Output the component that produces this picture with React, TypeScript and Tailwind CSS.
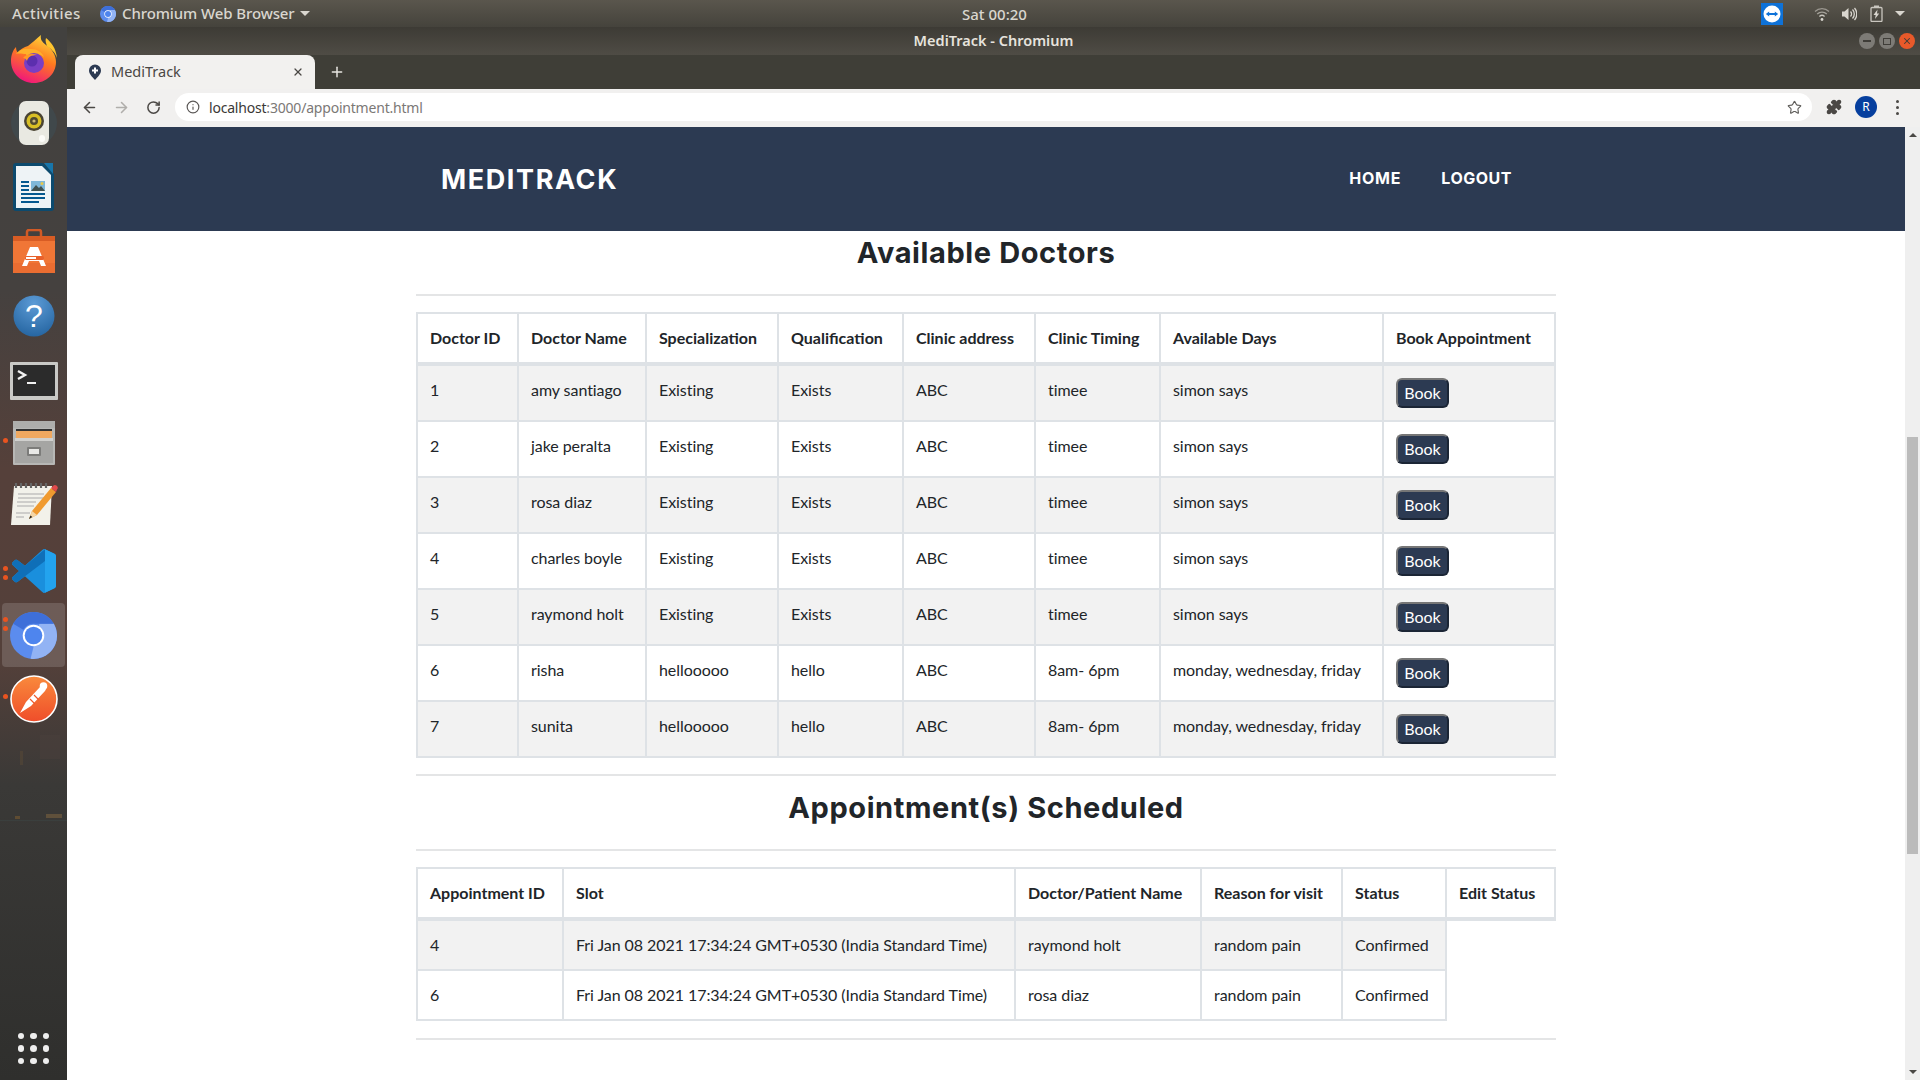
import { ArrowLeft, ArrowRight, RotateCw, Info, Star, Puzzle, X, Plus } from 'lucide-react'

const doctors = [
  ['1', 'amy santiago', 'Existing', 'Exists', 'ABC', 'timee', 'simon says'],
  ['2', 'jake peralta', 'Existing', 'Exists', 'ABC', 'timee', 'simon says'],
  ['3', 'rosa diaz', 'Existing', 'Exists', 'ABC', 'timee', 'simon says'],
  ['4', 'charles boyle', 'Existing', 'Exists', 'ABC', 'timee', 'simon says'],
  ['5', 'raymond holt', 'Existing', 'Exists', 'ABC', 'timee', 'simon says'],
  ['6', 'risha', 'hellooooo', 'hello', 'ABC', '8am- 6pm', 'monday, wednesday, friday'],
  ['7', 'sunita', 'hellooooo', 'hello', 'ABC', '8am- 6pm', 'monday, wednesday, friday'],
]
const doctorCols = [
  ['Doctor ID', 'w-[101px]'], ['Doctor Name', 'w-[128px]'], ['Specialization', 'w-[132px]'], ['Qualification', 'w-[125px]'],
  ['Clinic address', 'w-[132px]'], ['Clinic Timing', 'w-[125px]'], ['Available Days', 'w-[223px]'], ['Book Appointment', 'w-[172px]'],
]
const appts = [
  ['4', 'Fri Jan 08 2021 17:34:24 GMT+0530 (India Standard Time)', 'raymond holt', 'random pain', 'Confirmed'],
  ['6', 'Fri Jan 08 2021 17:34:24 GMT+0530 (India Standard Time)', 'rosa diaz', 'random pain', 'Confirmed'],
]
const apptCols = [
  ['Appointment ID', 'w-[146px]'], ['Slot', 'w-[452px]'], ['Doctor/Patient Name', 'w-[186px]'], ['Reason for visit', 'w-[141px]'],
  ['Status', 'w-[104px]'], ['Edit Status', 'w-[109px]'],
]

const thCls = 'border-2 border-b-4 border-[#dee2e6] px-3 py-3 text-left align-top font-bold whitespace-nowrap'
const tdCls = 'border-2 border-[#dee2e6] p-3 text-left align-top whitespace-nowrap tracking-[-0.06px]'

function Chromium({ size }: { size: number }) {
  return (
    <svg width={size} height={size} viewBox="0 0 48 48">
      <circle cx="24" cy="24" r="24" fill="#5b8cee" />
      <path d="M44.8 12H30L21 47.8A24 24 0 0 0 44.8 12Z" fill="#92b3f4" />
      <path d="M3.2 12A24 24 0 0 1 44.8 12H24A12 12 0 0 0 13.6 18Z" fill="#3e6fd9" />
      <circle cx="24" cy="24" r="11" fill="#fff" />
      <circle cx="24" cy="24" r="9" fill="#4e85ee" />
    </svg>
  )
}

function Firefox() {
  return (
    <svg width="48" height="50" viewBox="0 0 48 50">
      <defs>
        <linearGradient id="ffa" x1="0.7" y1="0" x2="0.3" y2="1">
          <stop offset="0" stopColor="#ffd53a" />
          <stop offset="0.45" stopColor="#ff7a1f" />
          <stop offset="1" stopColor="#f0127f" />
        </linearGradient>
      </defs>
      <path d="M24 49C11 49 1 39 1 27c0-6 2-11 5-14 0 3 1 5 2 6 2-4 6-6 10-7 4-3 8-7 13-11-1 4 1 7 5 10 6 4 10 10 10 17 0 12-10 21-22 21Z" fill="url(#ffa)" />
      <path d="M36 4c5 4 10 10 11 20-2-6-6-9-10-12-1-3-2-5-1-8Z" fill="#ffc52e" />
      <path d="M6 20c3-5 9-6 15-5 6 0 11 3 13 8-3-3-6-3-8-2-3-1-5 0-7 2-2 1-2 0-3-3-3 0-7-1-10 0Z" fill="#ffb02a" />
      <circle cx="24" cy="29" r="10" fill="#7a3fc4" />
      <circle cx="22" cy="27" r="5.5" fill="#5c2fae" />
      <path d="M13 24c3-4 9-5 14-3-6 0-9 2-10 6-1-2-2-3-4-3Z" fill="#ff9a22" />
    </svg>
  )
}

function Speaker() {
  return (
    <svg width="48" height="46" viewBox="0 0 48 46">
      <circle cx="24" cy="23" r="23" fill="#3d5360" opacity="0.4" />
      <rect x="9" y="1" width="30" height="44" rx="7" fill="#e9e9e2" />
      <circle cx="24" cy="21" r="10" fill="#4a4433" />
      <circle cx="24" cy="21" r="7.5" fill="#d8bf25" />
      <circle cx="24" cy="21" r="4" fill="#4f4a2f" />
      <circle cx="24" cy="21" r="1.6" fill="#c9b87a" />
      <rect x="29" y="35" width="6" height="7" rx="3" fill="#fbfbf8" />
    </svg>
  )
}

function Writer() {
  return (
    <svg width="42" height="48" viewBox="0 0 42 48">
      <path d="M3 0H30L41 11V45a3 3 0 0 1-3 3H3a3 3 0 0 1-3-3V3a3 3 0 0 1 3-3Z" fill="#0c4a6e" />
      <path d="M3 3H29L38 12V45H3Z" fill="#eef3f6" />
      <path d="M31 0H40V11Z" fill="#1876ab" />
      <rect x="8" y="18" width="8" height="2" fill="#05588f" />
      <rect x="8" y="22" width="8" height="2" fill="#05588f" />
      <rect x="8" y="26" width="8" height="2" fill="#05588f" />
      <rect x="8" y="30" width="24" height="2" fill="#05588f" />
      <rect x="8" y="34" width="24" height="2" fill="#05588f" />
      <rect x="8" y="38" width="18" height="2" fill="#05588f" />
      <rect x="18" y="18" width="14" height="10" fill="#7fb7d8" />
      <path d="M18 28l5-6 3 3 2-2 4 5Z" fill="#40504f" />
      <circle cx="29" cy="20.5" r="1.5" fill="#e8c84a" />
    </svg>
  )
}

function Software() {
  return (
    <svg width="44" height="44" viewBox="0 0 44 44">
      <path d="M15 8V3a2 2 0 0 1 2-2h10a2 2 0 0 1 2 2v5" stroke="#d15a26" strokeWidth="2.5" fill="none" />
      <path d="M1 7H43V44H1Z" fill="#f07636" />
      <path d="M1 7H43L43 12H1Z" fill="#d85c24" />
      <path d="M1 34H43V44H1Z" fill="#ea6d31" />
      <path d="M18 18h8l8 19h-5l-2-5H17l-2 5h-5Z" fill="#fff" />
      <rect x="13" y="27" width="19" height="4" rx="1.5" fill="#e9612a" />
      <rect x="14" y="28" width="10" height="2" fill="#fff" />
    </svg>
  )
}

function Help() {
  return (
    <svg width="42" height="42" viewBox="0 0 42 42">
      <defs>
        <radialGradient id="hlp" cx="0.5" cy="0.2" r="0.9">
          <stop offset="0" stopColor="#5c9bd6" />
          <stop offset="1" stopColor="#20609c" />
        </radialGradient>
      </defs>
      <circle cx="21" cy="21" r="20.5" fill="url(#hlp)" />
      <text x="21" y="32" textAnchor="middle" fontSize="32" fontFamily="Liberation Sans, sans-serif" fill="#fff">?</text>
    </svg>
  )
}

function Terminal() {
  return (
    <svg width="48" height="38" viewBox="0 0 48 38">
      <rect x="0" y="0" width="48" height="38" rx="1" fill="#c9c9c6" />
      <rect x="3" y="3" width="42" height="31" fill="#2b2b2b" />
      <path d="M8 9l7 4-7 4" stroke="#f1f1f1" strokeWidth="2.4" fill="none" />
      <rect x="17" y="20" width="9" height="2" fill="#f1f1f1" />
    </svg>
  )
}

function Files() {
  return (
    <svg width="44" height="44" viewBox="0 0 44 44">
      <rect x="1" y="0" width="42" height="9" fill="#aeaeac" />
      <rect x="1" y="7" width="42" height="37" rx="1" fill="#b7b7b5" />
      <rect x="4" y="8" width="36" height="10" fill="#333" />
      <rect x="4" y="10" width="36" height="7" fill="#f0a860" />
      <rect x="3" y="17" width="38" height="25" fill="#a5a5a3" />
      <rect x="3" y="17" width="38" height="3" fill="#d0d0ce" />
      <rect x="15" y="26" width="14" height="9" rx="1" fill="#7c7c7a" />
      <rect x="17" y="28" width="10" height="5" fill="#e8e8e6" />
    </svg>
  )
}

function Editor() {
  return (
    <svg width="48" height="46" viewBox="0 0 48 46">
      <path d="M4 6H42L40 45H1Z" fill="#f2f1ea" />
      <path d="M6 3v5M11 3v5M16 3v5M21 3v5M26 3v5M31 3v5M36 3v5" stroke="#666" strokeWidth="2.2" />
      <path d="M8 14H34M8 18H36M7 22H26M7 26H24M6 33H20M6 37H14" stroke="#aaa" strokeWidth="1.2" />
      <path d="M19 39l3-8L41 8l5 4-19 23Z" fill="#f09a2f" />
      <path d="M19 39l3-8 5 4Z" fill="#f3d6a8" />
      <path d="M19 39l1.4-3.5 2 1.6Z" fill="#222" />
      <path d="M41 8l2-2a2.5 2.5 0 0 1 4 3.5l-1 2.5Z" fill="#e04b4b" />
    </svg>
  )
}

function VSCode() {
  return (
    <svg width="44" height="44" viewBox="0 0 100 100">
      <path d="M70.9119 99.3171C72.4869 99.9307 74.2828 99.8914 75.8725 99.1264L96.4608 89.2197C98.6242 88.1787 100 85.9892 100 83.5872V16.4133C100 14.0113 98.6243 11.8218 96.4609 10.7808L75.8725 0.873756C73.7862 -0.130129 71.3446 0.11576 69.5135 1.44695C69.252 1.63711 69.0028 1.84943 68.769 2.08341L29.3551 38.0415L12.1872 25.0096C10.589 23.7965 8.35363 23.8959 6.86933 25.2461L1.36303 30.2549C-0.452552 31.9064 -0.454633 34.7627 1.35853 36.417L16.2471 50.0001L1.35853 63.5832C-0.454633 65.2374 -0.452552 68.0938 1.36303 69.7453L6.86933 74.7541C8.35363 76.1043 10.589 76.2037 12.1872 74.9905L29.3551 61.9587L68.769 97.9167C69.3925 98.5406 70.1246 99.0104 70.9119 99.3171ZM75.0152 27.2989L45.1091 50.0001L75.0152 72.7012V27.2989Z" fill="#1a8fdd" />
      <path d="M75 0.5L29.4 38 12.2 25C10.6 23.8 8.4 23.9 6.9 25.2L1.4 30.3C-0.5 31.9-0.5 34.8 1.4 36.4L16.2 50 1.4 63.6C-0.5 65.2-0.5 68.1 1.4 69.7L6.9 74.8C8.4 76.1 10.6 76.2 12.2 75L75 27.3Z" fill="#0f6fb8" />
      <path d="M75 0.6L96.5 10.8C98.6 11.8 100 14 100 16.4V83.6C100 86 98.6 88.2 96.5 89.2L75 99.6V72.7 27.3Z" fill="#23a3ee" />
    </svg>
  )
}

function Postman() {
  return (
    <svg width="48" height="48" viewBox="0 0 48 48">
      <defs>
        <linearGradient id="pm" x1="0.5" y1="0" x2="0.5" y2="1">
          <stop offset="0" stopColor="#f98a3c" />
          <stop offset="1" stopColor="#ef4d2a" />
        </linearGradient>
      </defs>
      <circle cx="24" cy="24" r="23" fill="url(#pm)" stroke="#fff" strokeWidth="1.6" />
      <path d="M10 38l11-7 14-15a3 3 0 0 0-5-4L16 27Z" fill="#fff" />
      <circle cx="33.5" cy="11" r="3.8" fill="#fff" />
      <path d="M20 24l5 5M24 20l5 5" stroke="#ef5a2c" strokeWidth="1.2" />
    </svg>
  )
}

function DockIcon({ children, dots = 0, active = false }: { children: React.ReactNode; dots?: number; active?: boolean }) {
  return (
    <div className={active ? 'relative mx-[2px] flex h-16 items-center justify-center rounded-[4px] bg-white/15' : 'relative flex h-16 items-center justify-center'}>
      {dots > 0 && (
        <div className={active ? 'absolute left-[1px] top-[14px] flex flex-col gap-[4px]' : 'absolute left-[3px] top-[27px] flex flex-col gap-[4px]'}>
          {Array.from({ length: dots }).map((_, i) => <div key={i} className="h-[5px] w-[5px] rounded-full bg-[#e95420]" />)}
        </div>
      )}
      {children}
    </div>
  )
}

function Dock() {
  return (
    <div className="relative flex w-[67px] shrink-0 flex-col bg-[linear-gradient(180deg,#42413f_0%,#45413f_25%,#55403a_42%,#54403a_60%,#3a3937_72%,#2f2f2d_100%)]">
      <DockIcon><Firefox /></DockIcon>
      <DockIcon><Speaker /></DockIcon>
      <DockIcon><Writer /></DockIcon>
      <DockIcon><Software /></DockIcon>
      <DockIcon><div className="mt-[1px]"><Help /></div></DockIcon>
      <DockIcon><div className="mt-[3px]"><Terminal /></div></DockIcon>
      <DockIcon dots={1}><Files /></DockIcon>
      <DockIcon><div className="-mt-[8px]"><Editor /></div></DockIcon>
      <DockIcon dots={2}><VSCode /></DockIcon>
      <DockIcon dots={2} active><Chromium size={47} /></DockIcon>
      <DockIcon dots={1}><Postman /></DockIcon>
      <svg className="absolute left-0 top-[708px]" width="67" height="90" viewBox="0 0 67 90">
        <rect x="40" y="0" width="20" height="24" fill="#4a3f3b" opacity="0.5" />
        <rect x="20" y="16" width="3" height="14" fill="#5a4a35" opacity="0.5" />
        <rect x="15" y="81" width="5" height="3" fill="#7a5a30" opacity="0.6" />
        <rect x="46" y="79" width="16" height="4" fill="#7a6040" opacity="0.6" />
        <rect x="0" y="85" width="67" height="1" fill="#3e4a4a" opacity="0.4" />
      </svg>
      <div className="relative mt-auto mb-[16px] grid grid-cols-3 gap-[6px] self-center">
        {Array.from({ length: 9 }).map((_, i) => <div key={i} className="h-[6.5px] w-[6.5px] rounded-full bg-[#eeeeee]" />)}
      </div>
    </div>
  )
}

function TopBar() {
  return (
    <div className="relative flex h-[27px] shrink-0 items-center bg-[linear-gradient(180deg,#5a564d,#45433c)] font-['Noto_Sans',sans-serif] text-[15px] font-medium text-[#d9d6cf]">
      <span className="ml-[12px] w-[88px] tracking-[0.4px]">Activities</span>
      <Chromium size={16} />
      <span className="ml-[6px] tracking-[-0.1px]">Chromium Web Browser</span>
      <span className="ml-[5px] h-0 w-0 border-x-[5px] border-t-[5px] border-x-transparent border-t-[#d9d6cf]" />
      <span className="absolute left-[962px] top-[3px]">Sat 00:20</span>
      <div className="ml-auto flex items-center">
        <div className="flex h-[22px] w-[22px] items-center justify-center bg-[#0e72d8]">
          <svg width="18" height="18" viewBox="0 0 18 18">
            <circle cx="9" cy="9" r="8.5" fill="#fff" />
            <path d="M2.8 9l3.4-2.6v1.7h5.6V6.4L15.2 9l-3.4 2.6V9.9H6.2v1.7Z" fill="#0e72d8" />
          </svg>
        </div>
        <svg className="ml-[31px]" width="16" height="16" viewBox="0 0 16 16" fill="none" stroke="#c9c6bf" strokeWidth="1.3">
          <path d="M1 5.5a10 10 0 0 1 14 0" opacity="0.6" />
          <path d="M3.2 8a7 7 0 0 1 9.6 0" opacity="0.7" />
          <path d="M5.4 10.5a3.8 3.8 0 0 1 5.2 0" />
          <circle cx="8" cy="13.5" r="1.4" fill="#d9d6cf" stroke="none" />
        </svg>
        <svg className="ml-[11px]" width="16" height="16" viewBox="0 0 16 16" fill="none" stroke="#d9d6cf" strokeWidth="1.3">
          <path d="M1 5.5h2.5L7.5 2v12L3.5 10.5H1Z" fill="#d9d6cf" stroke="none" />
          <path d="M9.5 5.5a3.5 3.5 0 0 1 0 5M11.5 3.5a6.5 6.5 0 0 1 0 9M13.5 2a9 9 0 0 1 0 12" />
        </svg>
        <svg className="ml-[13px]" width="13" height="17" viewBox="0 0 13 17" fill="none">
          <rect x="1" y="2.5" width="11" height="14" rx="1" stroke="#c9c6bf" strokeWidth="1.3" />
          <rect x="4" y="0.5" width="5" height="2" fill="#c9c6bf" />
          <path d="M7.5 4.5L3.5 10h2.2l-.7 4 4.2-5.6H7Z" fill="#d9d6cf" />
        </svg>
        <span className="ml-[12px] mr-[15px] h-0 w-0 border-x-[5px] border-t-[5px] border-x-transparent border-t-[#d9d6cf]" />
      </div>
    </div>
  )
}

function TitleBar() {
  return (
    <div className="relative flex h-[28px] shrink-0 items-center justify-center bg-[linear-gradient(180deg,#3d3b35,#4f4c45)]">
      <span className="font-['Noto_Sans',sans-serif] text-[14.5px] font-semibold text-[#e6e3dd]">MediTrack - Chromium</span>
      <div className="absolute right-[5px] top-[6px] flex gap-[4px]">
        <div className="flex h-4 w-4 items-center justify-center rounded-full bg-[#7d7b76]"><div className="h-[1.5px] w-2 bg-[#3f3d38]" /></div>
        <div className="flex h-4 w-4 items-center justify-center rounded-full bg-[#7d7b76]"><div className="h-[7px] w-[8px] border border-[#3f3d38]" /></div>
        <div className="flex h-4 w-4 items-center justify-center rounded-full bg-[#e8592a]"><X size={10} strokeWidth={2.5} className="text-[#3f3d38]" /></div>
      </div>
    </div>
  )
}

function TabStrip() {
  return (
    <div className="flex h-[34px] shrink-0 items-end bg-[#3f3e37] pl-[8px]">
      <div className="flex h-[34px] w-[240px] items-center rounded-t-[8px] bg-[#f2f1ef] pb-[1px] pl-[13px] pr-[11px]">
        <svg width="14" height="16" viewBox="0 0 14 16">
          <path d="M7 16C4 12.5 1 10 1 6.5a6 6 0 0 1 12 0C13 10 10 12.5 7 16Z" fill="#2c3a52" />
          <path d="M6 3.5h2v2h2v2H8v2H6v-2H4v-2h2Z" fill="#fff" />
        </svg>
        <span className="ml-[9px] font-['Noto_Sans',sans-serif] text-[14.5px] text-[#4a4744]">MediTrack</span>
        <X size={12} strokeWidth={2.5} className="ml-auto text-[#4a4744]" />
      </div>
      <Plus size={16} strokeWidth={2.2} className="mb-[9px] ml-[14px] text-[#e8e6e1]" />
    </div>
  )
}

function Toolbar() {
  return (
    <div className="flex h-[38px] shrink-0 items-center bg-[#f1f0ef] pb-[2px] pl-[14px]">
      <ArrowLeft size={17} strokeWidth={2.2} className="text-[#4b4845]" />
      <ArrowRight size={17} strokeWidth={2.2} className="ml-[15px] text-[#b0aeab]" />
      <RotateCw size={15} strokeWidth={2.4} className="ml-[16px] text-[#4b4845]" />
      <div className="ml-[14px] flex h-[28px] w-[1637px] items-center rounded-full bg-white pl-[11px] pr-[10px] font-['Noto_Sans',sans-serif] text-[14px] tracking-[-0.2px]">
        <Info size={14} className="text-[#5a5755]" />
        <span className="ml-[9px] text-[#3a3836]">localhost</span>
        <span className="text-[#7b7876]">:3000/appointment.html</span>
        <Star size={15} strokeWidth={1.8} className="ml-auto text-[#5f5d5a]" />
      </div>
      <Puzzle size={16} fill="#4b4845" className="ml-[14px] text-[#4b4845]" />
      <div className="ml-[13px] flex h-[22px] w-[22px] items-center justify-center rounded-full bg-[#063f9e] font-['Noto_Sans',sans-serif] text-[12px] text-white">R</div>
      <div className="ml-[19px] flex flex-col gap-[3px]">
        <div className="h-[3px] w-[3px] rounded-full bg-[#4b4845]" />
        <div className="h-[3px] w-[3px] rounded-full bg-[#4b4845]" />
        <div className="h-[3px] w-[3px] rounded-full bg-[#4b4845]" />
      </div>
    </div>
  )
}

function Scrollbar() {
  return (
    <div className="flex w-[15px] shrink-0 flex-col items-center bg-[#efefef]">
      <div className="mt-[6px] h-0 w-0 border-x-[4px] border-b-[4px] border-x-transparent border-b-[#4a4845]" />
      <div className="mt-[300px] h-[417px] w-[11px] bg-[#bbbbbb]" />
      <div className="mb-[6px] mt-auto h-0 w-0 border-x-[4px] border-t-[4px] border-x-transparent border-t-[#4a4845]" />
    </div>
  )
}

function Heading({ children, first }: { children: string; first?: boolean }) {
  return (
    <h2 className={first ? "mt-[4px] mb-[23px] text-center font-['Inter',sans-serif] text-[29px] leading-[36px] font-bold tracking-[0.6px] text-[#212529]" : "mt-[14px] mb-[23px] text-center font-['Inter',sans-serif] text-[29px] leading-[36px] font-bold tracking-[0.6px] text-[#212529]"}>
      {children}
    </h2>
  )
}

export default function App() {
  return (
    <div className="flex h-screen w-screen flex-col overflow-hidden bg-white">
      <TopBar />
      <div className="flex min-h-0 flex-1">
        <Dock />
        <div className="flex min-w-0 flex-1 flex-col">
          <TitleBar />
          <TabStrip />
          <Toolbar />
          <div className="flex min-h-0 flex-1">
            <div className="min-w-0 flex-1 font-['Lato',sans-serif] text-[16px] leading-[24px] text-[#212529]">
              <nav className="h-[104px] bg-[#2c3a52] text-white">
                <div className="mx-auto flex h-full w-[1140px] items-center pl-[25px] pr-[44px] font-['Inter',sans-serif]">
                  <span className="mt-[2px] text-[27px] font-bold tracking-[1.6px]">MEDITRACK</span>
                  <span className="ml-auto -mt-[2px] text-[16px] font-bold tracking-[0.8px]">HOME</span>
                  <span className="ml-[40px] -mt-[2px] text-[16px] font-bold tracking-[0.5px]">LOGOUT</span>
                </div>
              </nav>
              <main className="mx-auto w-[1140px]">
                <Heading first>Available Doctors</Heading>
                <hr className="border-t-2 border-[#e4e5e6]" />
                <table className="mt-[16px] w-[1138px] table-fixed border-collapse">
                  <thead>
                    <tr>
                      {doctorCols.map(([name, w]) => <th key={name} className={`${thCls} ${w}`}>{name}</th>)}
                    </tr>
                  </thead>
                  <tbody>
                    {doctors.map((d, i) => (
                      <tr key={d[0]} className={i % 2 === 0 ? 'bg-[#f2f2f2]' : ''}>
                        {d.map((c, j) => <td key={j} className={tdCls}>{c}</td>)}
                        <td className="border-2 border-[#dee2e6] p-3">
                          <button className="block h-[30px] w-[53px] rounded-[6px] border-2 border-t-[#767676] border-l-[#767676] border-r-[#1b2535] border-b-[#1b2535] bg-[#2c3a52] text-center text-[16px] leading-[24px] text-white">Book</button>
                        </td>
                      </tr>
                    ))}
                  </tbody>
                </table>
                <hr className="mt-[16px] border-t-2 border-[#e4e5e6]" />
                <Heading>Appointment(s) Scheduled</Heading>
                <hr className="border-t-2 border-[#e4e5e6]" />
                <table className="mt-[16px] w-[1138px] table-fixed border-collapse">
                  <thead>
                    <tr>
                      {apptCols.map(([name, w]) => <th key={name} className={`${thCls} ${w}`}>{name}</th>)}
                    </tr>
                  </thead>
                  <tbody>
                    {appts.map((a, i) => (
                      <tr key={a[0]}>
                        {a.map((c, j) => <td key={j} className={i % 2 === 0 ? `${tdCls} bg-[#f2f2f2]` : tdCls}>{c}</td>)}
                      </tr>
                    ))}
                  </tbody>
                </table>
                <hr className="mt-[17px] border-t-2 border-[#e4e5e6]" />
              </main>
            </div>
            <Scrollbar />
          </div>
        </div>
      </div>
    </div>
  )
}
